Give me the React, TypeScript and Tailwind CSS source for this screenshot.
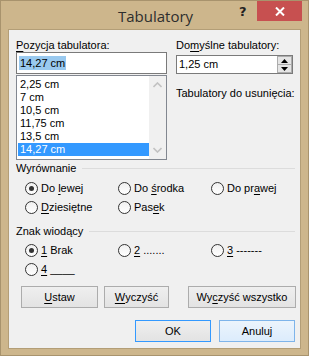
import React from "react";

const U = ({ children }: { children: React.ReactNode }) => (
  <span className="underline decoration-1 underline-offset-[2px]">{children}</span>
);

function Radio({ checked, label }: { checked?: boolean; label: React.ReactNode }) {
  return (
    <div className="flex items-center h-[19px]">
      <span className="w-[13px] h-[13px] rounded-full border border-[#333333] bg-gradient-to-b from-[#f0f0f0] to-[#ffffff] flex items-center justify-center shrink-0">
        {checked && <span className="w-[5px] h-[5px] rounded-full bg-[#333333]" />}
      </span>
      <span className="ml-[3px] leading-[13px] whitespace-nowrap">{label}</span>
    </div>
  );
}

function GroupHeader({ title }: { title: string }) {
  return (
    <div className="flex items-center h-[13px] ml-[7px] mr-[5px]">
      <span className="leading-[13px]">{title}</span>
      <span className="flex-1 h-px bg-[#dcdcdc] ml-[6px]" />
    </div>
  );
}

function Btn({ children, className }: { children: React.ReactNode; className: string }) {
  return (
    <div
      className={
        "h-[22px] flex items-center justify-center border bg-gradient-to-b " + className
      }
    >
      <span className="leading-[13px] whitespace-nowrap">{children}</span>
    </div>
  );
}

export default function App() {
  const items = ["2,25 cm", "7 cm", "10,5 cm", "11,75 cm", "13,5 cm", "14,27 cm"];
  return (
    <div className="w-[309px] h-[356px] bg-[#cdb68c] border border-[#a8936d] flex flex-col font-['Liberation_Sans',Arial,sans-serif] text-[11px] text-black overflow-hidden">
      {/* Title bar */}
      <div className="h-[28px] flex items-start relative shrink-0">
        <div className="flex-1 flex justify-center pt-[5px]">
          <span className="font-['Open_Sans',sans-serif] text-[15px] leading-[20px] text-[#2e2e2e] ml-[2px]">
            Tabulatory
          </span>
        </div>
        <span className="absolute left-[238px] top-[3px] font-['DejaVu_Sans',sans-serif] font-bold text-[13px] leading-[16px] text-[#222]">
          ?
        </span>
        <div className="absolute left-[256px] top-0 w-[45px] h-[20px] bg-[#c75050] flex items-center justify-center">
          <svg width="10" height="9" viewBox="0 0 10 9">
            <path d="M1 0.5 L9 8.5 M9 0.5 L1 8.5" stroke="#fff" strokeWidth="2" />
          </svg>
        </div>
      </div>

      {/* Client area */}
      <div className="mx-[7px] h-[320px] border border-[#b39e77] bg-[#f0f0f0] flex flex-col">
        <div className="flex pt-[9px]">
          {/* Left column */}
          <div className="ml-[7px] w-[151px] flex flex-col">
            <div className="h-[13px] leading-[13px] whitespace-nowrap">
              <U>P</U>ozycja tabulatora:
            </div>
            <div className="h-[22px] border border-[#7a7a7a] bg-white flex items-center pl-[2px]">
              <span className="bg-[#99c9ef] px-[1px] leading-[14px]">14,27 cm</span>
            </div>
            <div className="mt-px h-[85px] border border-[#828790] bg-white flex">
              <div className="flex-1 flex flex-col pt-[2px] pl-px">
                {items.map((it, i) => (
                  <div
                    key={it}
                    className={
                      "h-[13px] leading-[13px] pl-[2px] " +
                      (i === items.length - 1 ? "bg-[#3399ff] text-white" : "")
                    }
                  >
                    {it}
                  </div>
                ))}
              </div>
              <div className="w-[17px] bg-[#f0f0f0] flex flex-col items-center justify-between py-[6px]">
                <svg width="9" height="6" viewBox="0 0 9 6">
                  <path d="M0.5 5 L4.5 1 L8.5 5" stroke="#c2c2c2" strokeWidth="1.6" fill="none" />
                </svg>
                <svg width="9" height="6" viewBox="0 0 9 6">
                  <path d="M0.5 1 L4.5 5 L8.5 1" stroke="#c2c2c2" strokeWidth="1.6" fill="none" />
                </svg>
              </div>
            </div>
          </div>

          {/* Right column */}
          <div className="ml-[9px] w-[117px] flex flex-col">
            <div className="h-[13px] leading-[13px] whitespace-nowrap">
              Do<U>m</U>yślne tabulatory:
            </div>
            <div className="mt-[3px] h-[19px] border border-[#7a7a7a] bg-white flex">
              <div className="flex-1 flex items-center pl-[2px] leading-[13px]">1,25 cm</div>
              <div className="w-[15px] flex flex-col">
                <div className="flex-1 bg-[#e5e5e5] border border-[#acacac] flex items-center justify-center">
                  <svg width="7" height="4" viewBox="0 0 7 4">
                    <path d="M0 4 L3.5 0 L7 4 Z" fill="#000" />
                  </svg>
                </div>
                <div className="flex-1 bg-[#e5e5e5] border border-t-0 border-[#acacac] flex items-center justify-center">
                  <svg width="7" height="4" viewBox="0 0 7 4">
                    <path d="M0 0 L7 0 L3.5 4 Z" fill="#000" />
                  </svg>
                </div>
              </div>
            </div>
            <div className="mt-[13px] h-[13px] leading-[13px] whitespace-nowrap">Tabulatory do usunięcia:</div>
          </div>
        </div>

        {/* Wyrównanie */}
        <div className="mt-[2px]">
          <GroupHeader title="Wyrównanie" />
        </div>
        <div className="mt-[4px] pl-[16px] grid grid-cols-[93px_93px_1fr]">
          <Radio checked label={<>Do <U>l</U>ewej</>} />
          <Radio label={<>Do <U>ś</U>rodka</>} />
          <Radio label={<>Do pr<U>a</U>wej</>} />
          <Radio label={<><U>D</U>ziesiętne</>} />
          <Radio label={<>Pas<U>e</U>k</>} />
        </div>

        {/* Znak wiodący */}
        <div className="mt-[8px]">
          <GroupHeader title="Znak wiodący" />
        </div>
        <div className="mt-[3px] pl-[16px] grid grid-cols-[93px_93px_1fr]">
          <Radio checked label={<><U>1</U> Brak</>} />
          <Radio label={<><U>2</U> .......</>} />
          <Radio label={<><U>3</U> -------</>} />
          <Radio label={<><U>4</U> ____</>} />
        </div>

        {/* Buttons */}
        <div className="mt-[7px] flex">
          <Btn className="ml-[12px] w-[77px] border-[#acacac] from-[#efefef] to-[#e3e3e3]">
            <U>U</U>staw
          </Btn>
          <Btn className="ml-[6px] w-[65px] border-[#acacac] from-[#efefef] to-[#e3e3e3]">
            <U>W</U>yczyść
          </Btn>
          <Btn className="ml-[19px] w-[108px] border-[#acacac] from-[#efefef] to-[#e3e3e3]">
            Wy<U>c</U>zyść wszystko
          </Btn>
        </div>
        <div className="mt-[12px] flex">
          <Btn className="ml-[126px] w-[76px] border-[#3399ff] from-[#efefef] to-[#e3e3e3]">OK</Btn>
          <Btn className="ml-[8px] w-[76px] border-[#7eb4ea] from-[#ecf4fc] to-[#dcecfc]">Anuluj</Btn>
        </div>
      </div>
    </div>
  );
}
